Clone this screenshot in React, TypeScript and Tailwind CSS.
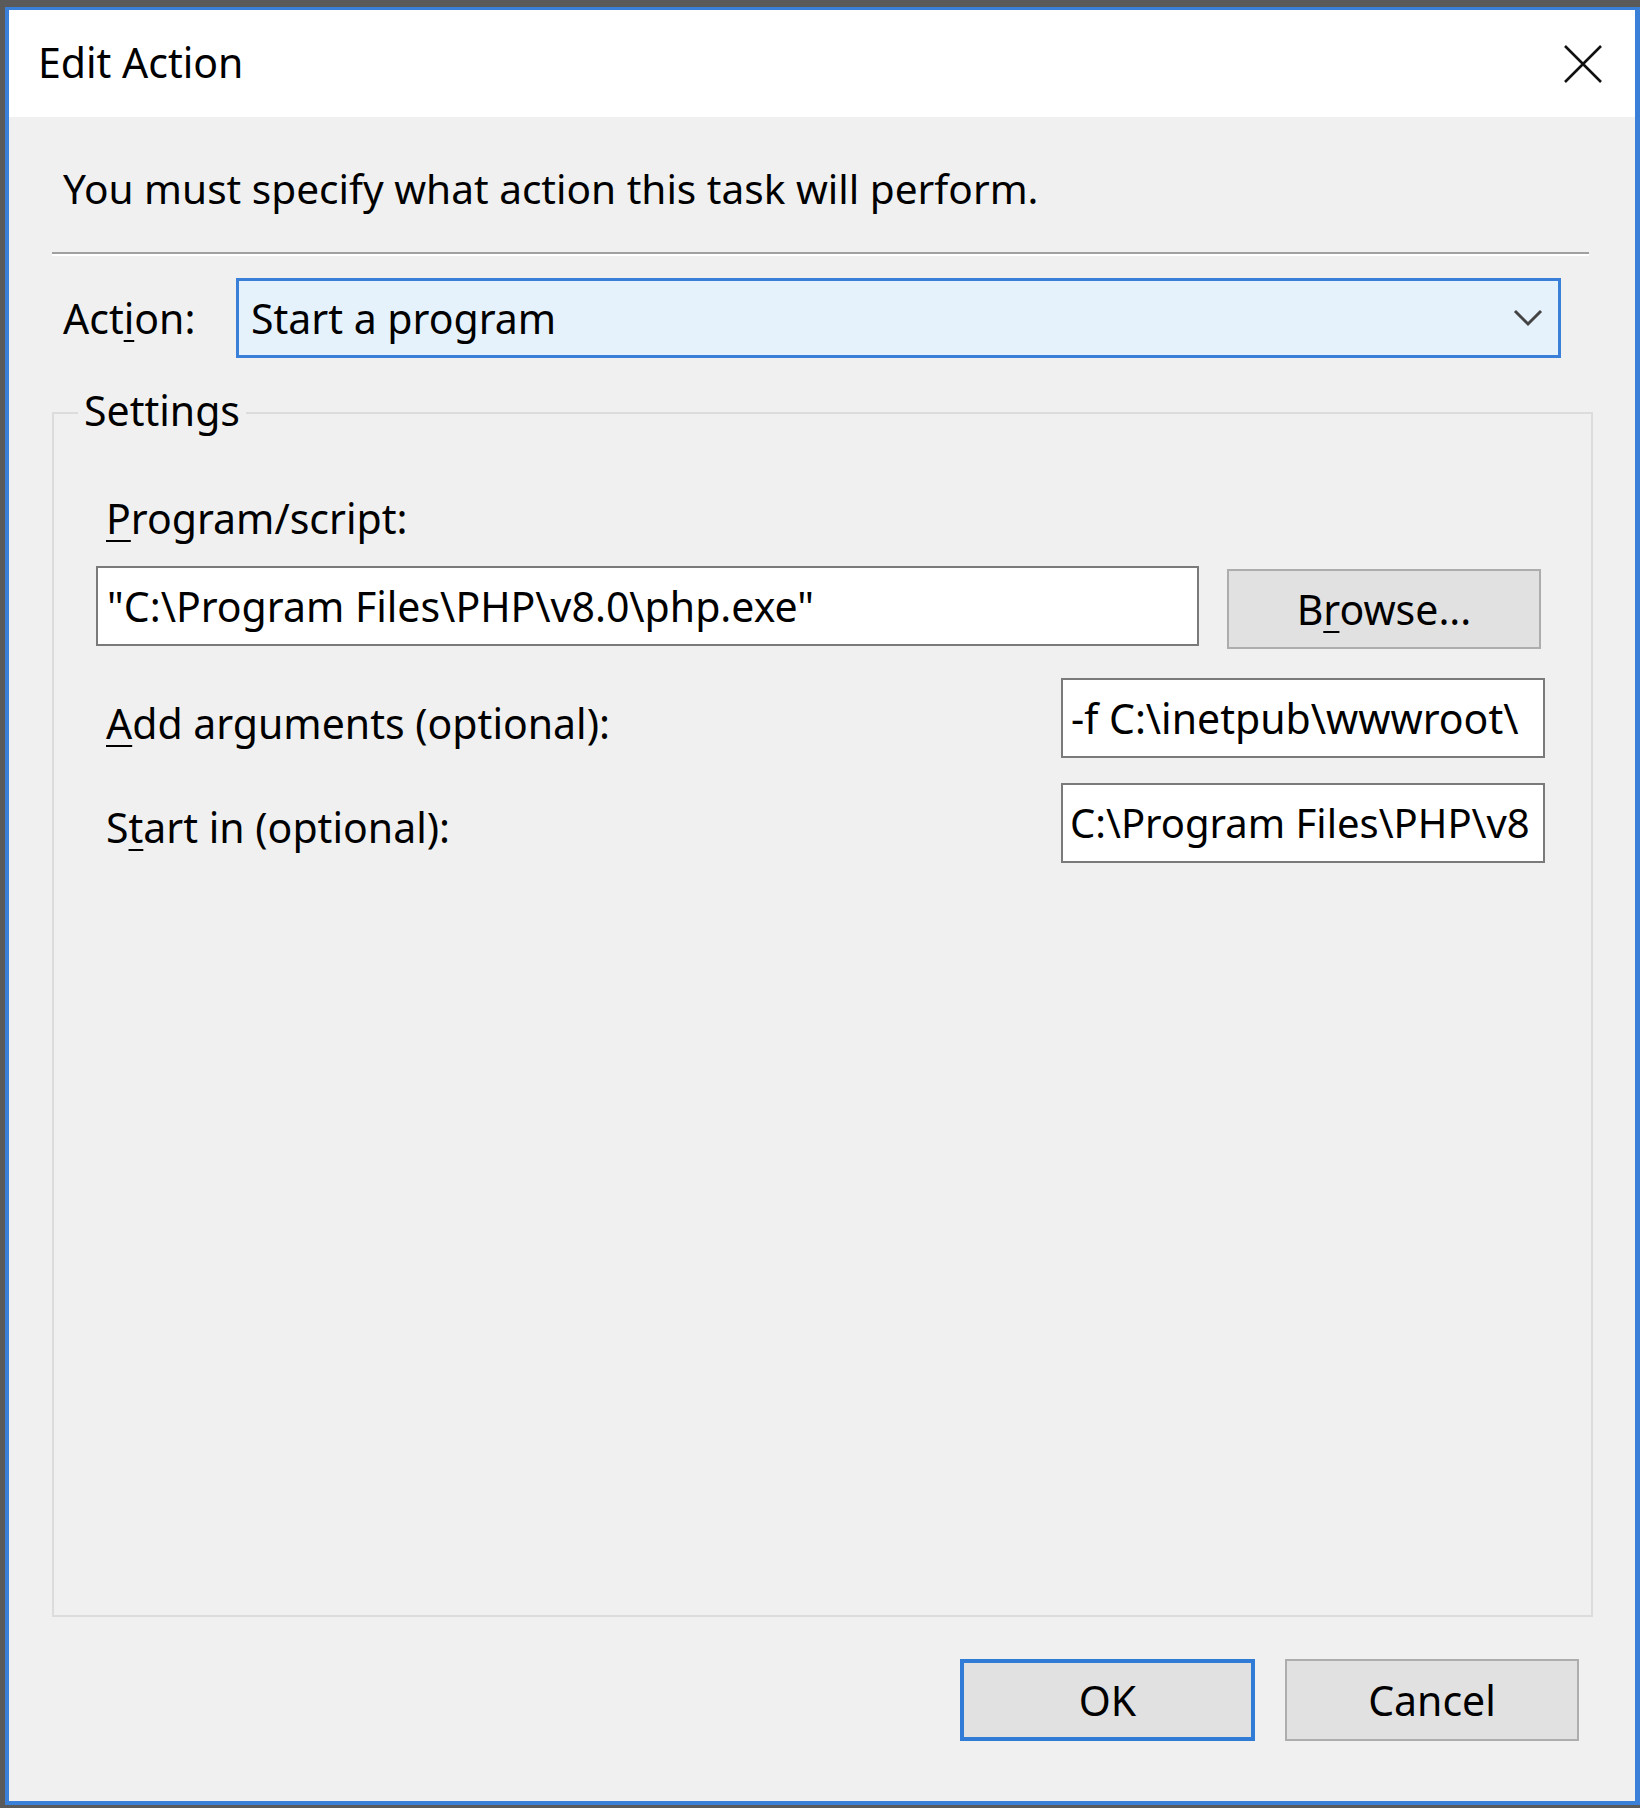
import React from "react";

const F = { fontFamily: '"Noto Sans", "Open Sans", sans-serif' };

function U({ children }: { children: React.ReactNode }) {
  return <span className="underline decoration-[2px] underline-offset-[6px]">{children}</span>;
}

export default function App() {
  return (
    <div className="w-[1640px] h-[1808px] bg-[#5a5a5a] pt-[7px] pl-[5px] pb-[3px] text-black" style={F}>
      <div className="w-[1635px] h-[1798px] border-t-[3px] border-l-[4px] border-r-[5px] border-b-[4px] border-[#3b80d8] flex flex-col">
        {/* Title bar */}
        <div className="h-[107px] bg-white flex items-center justify-between pl-[29px] pr-[32px]">
          <span className="text-[41px] leading-[56px] -mt-[3px]">Edit Action</span>
          <svg width="40" height="40" viewBox="0 0 40 40">
            <path d="M2 2 L38 38 M38 2 L2 38" stroke="#111" strokeWidth="2.6" fill="none" />
          </svg>
        </div>
        {/* Body */}
        <div className="flex-1 bg-[#f0f0f0] flex flex-col">
          <div className="mt-[44px] ml-[54px] text-[40.6px] leading-[56px]">
            You must specify what action this task will perform.
          </div>
          <div className="mt-[35px] ml-[43px] mr-[46px] h-[4px] border-t-2 border-b-2 border-t-[#a0a0a0] border-b-white" />
          {/* Action row */}
          <div className="mt-[22px] flex items-center">
            <span className="ml-[54px] w-[173px] text-[41px] leading-[56px]">
              Act<U>i</U>on:
            </span>
            <div className="w-[1325px] h-[80px] border-[3px] border-[#3b80d8] bg-[#e5f1fb] flex items-center justify-between pl-[12px] pr-[15px]">
              <span className="text-[41px] leading-[56px]">Start a program</span>
              <svg width="30" height="18" viewBox="0 0 30 18">
                <path d="M2 2 L15 15 L28 2" stroke="#444" strokeWidth="3" fill="none" />
              </svg>
            </div>
          </div>
          {/* Settings group */}
          <div className="relative mt-[54px] ml-[43px] w-[1541px] h-[1205px] border-2 border-[#dcdcdc] flex flex-col">
            <span className="absolute left-[24px] top-[-4px] -translate-y-1/2 px-[6px] bg-[#f0f0f0] text-[41px] leading-[56px]">
              Settings
            </span>
            <div className="mt-[76px] ml-[52px] text-[41px] leading-[56px]">
              <U>P</U>rogram/script:
            </div>
            <div className="mt-[20px] h-[83px] flex items-start">
              <div className="ml-[42px] w-[1103px] h-[80px] border-2 border-[#7a7a7a] bg-white flex items-center pl-[9px] overflow-hidden whitespace-nowrap">
                <span className="text-[41px] leading-[56px]">"C:\Program Files\PHP\v8.0\php.exe"</span>
              </div>
              <div className="ml-[28px] mt-[3px] w-[314px] h-[80px] border-2 border-[#adadad] bg-[#e1e1e1] flex items-center justify-center">
                <span className="text-[41px] leading-[56px]">
                  B<U>r</U>owse...
                </span>
              </div>
            </div>
            <div className="mt-[29px] h-[80px] flex items-start">
              <span className="ml-[52px] mt-[17px] text-[41px] leading-[56px]">
                <U>A</U>dd arguments (optional):
              </span>
              <div className="ml-auto mr-[46px] w-[484px] h-[80px] border-2 border-[#7a7a7a] bg-white flex items-center pl-[8px] overflow-hidden whitespace-nowrap">
                <span className="text-[41px] leading-[56px]">-f C:\inetpub\wwwroot\</span>
              </div>
            </div>
            <div className="mt-[25px] h-[80px] flex items-start">
              <span className="ml-[52px] mt-[16px] text-[41px] leading-[56px]">
                S<U>t</U>art in (optional):
              </span>
              <div className="ml-auto mr-[46px] w-[484px] h-[80px] border-2 border-[#7a7a7a] bg-white flex items-center pl-[7px] overflow-hidden whitespace-nowrap">
                <span className="text-[40px] leading-[56px]">C:\Program Files\PHP\v8</span>
              </div>
            </div>
          </div>
          {/* Buttons */}
          <div className="mt-[42px] flex justify-end gap-[30px] mr-[56px]">
            <div className="w-[295px] h-[82px] border-[4px] border-[#2f7bd6] bg-[#e1e1e1] flex items-center justify-center">
              <span className="text-[41px] leading-[56px]">OK</span>
            </div>
            <div className="w-[294px] h-[82px] border-2 border-[#adadad] bg-[#e1e1e1] flex items-center justify-center">
              <span className="text-[41px] leading-[56px]">Cancel</span>
            </div>
          </div>
        </div>
      </div>
    </div>
  );
}
